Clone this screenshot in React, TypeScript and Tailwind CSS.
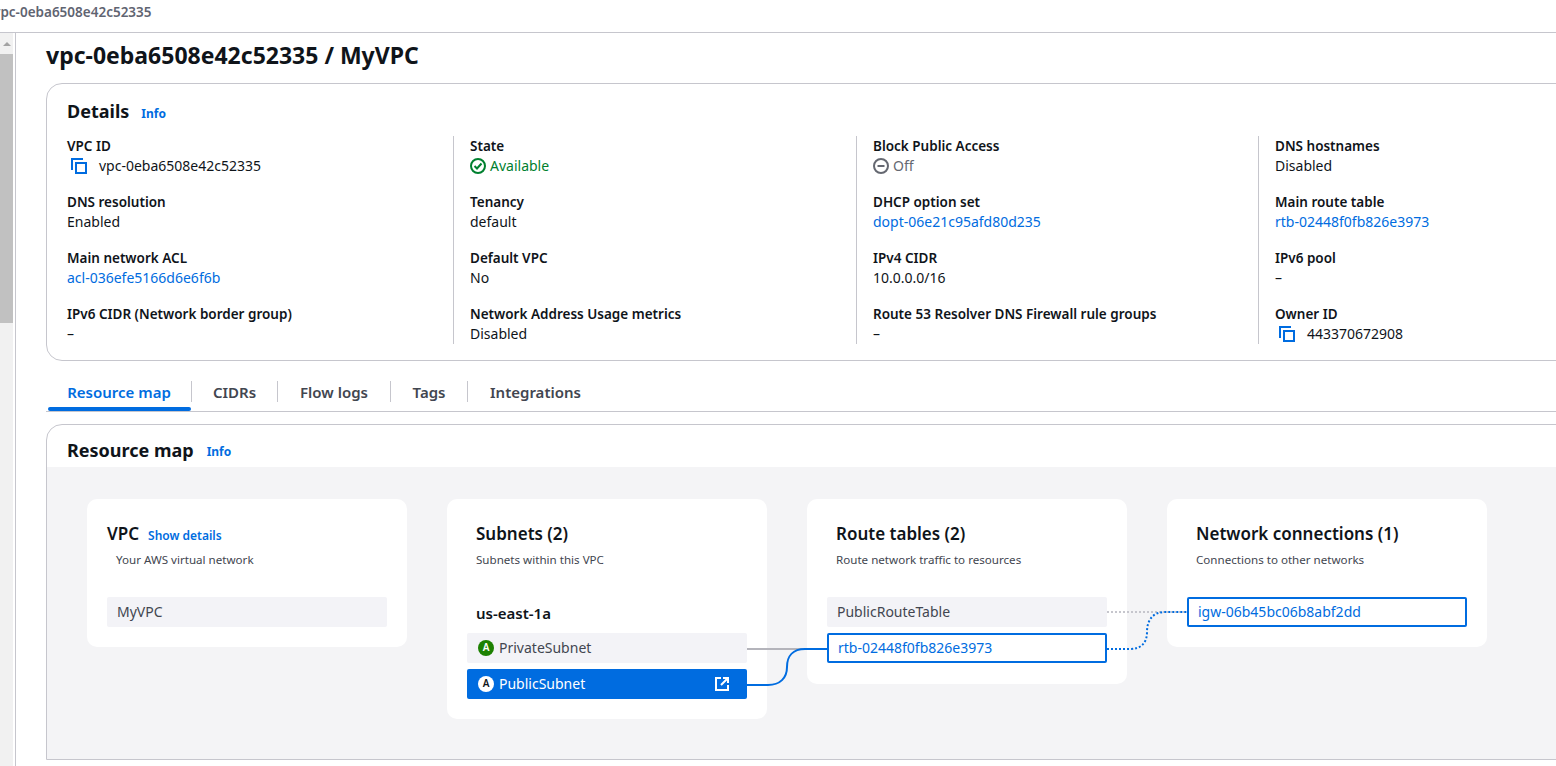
function CopyIcon() {
  return (
    <svg width="16" height="16" viewBox="0 0 16 16" fill="none" stroke="#006ce0" strokeWidth="2" className="shrink-0">
      <path d="M1 12V1h11" />
      <rect x="5" y="5" width="10" height="10" />
    </svg>
  );
}

function Field({ label, children }: { label: string; children: React.ReactNode }) {
  return (
    <div className="h-[40px] text-[14px] leading-[20px]">
      <div className="text-[13.5px] font-semibold text-[#0f141a]">{label}</div>
      <div className="text-[#0f141a]">{children}</div>
    </div>
  );
}

function Link({ children }: { children: React.ReactNode }) {
  return <span className="text-[#006ce0]">{children}</span>;
}

function Badge({ inverted }: { inverted?: boolean }) {
  return (
    <span
      className={
        inverted
          ? "flex h-4 w-4 items-center justify-center rounded-full bg-white text-[10px] font-semibold text-[#0f141a]"
          : "flex h-4 w-4 items-center justify-center rounded-full bg-[#1d8102] text-[10px] font-semibold text-white"
      }
    >
      A
    </span>
  );
}

const tabs = [
  { name: "Resource map", width: "w-[143px]" },
  { name: "CIDRs", width: "w-[86px]" },
  { name: "Flow logs", width: "w-[113px]" },
  { name: "Tags", width: "w-[77px]" },
  { name: "Integrations", width: "w-[136px]" },
];

export default function App() {
  return (
    <div className="h-[766px] w-[1556px] overflow-hidden bg-white font-['Noto_Sans',sans-serif] text-[#0f141a]">
      {/* top bar */}
      <div className="h-[33px] overflow-hidden border-b border-[#c6c6cd] pl-[1px] pt-[3px] text-[13.5px] font-semibold leading-[18px] text-[#5f6471]">
        <div className="ml-[-8px]">vpc-0eba6508e42c52335</div>
      </div>

      <div className="flex h-[733px]">
        {/* scrollbar */}
        <div className="flex h-full w-[13px] shrink-0 flex-col bg-[#f1f1f1]">
          <div className="flex h-[21px] items-center justify-center">
            <div className="h-0 w-0 border-x-[4px] border-b-[4px] border-x-transparent border-b-[#a3a3a3]" />
          </div>
          <div className="h-[269px] bg-[#c1c1c1]" />
        </div>
        <div className="ml-[2px] h-full w-[1px] shrink-0 bg-[#c6c6cd]" />

        <div className="w-[1800px] shrink-0 pl-[30px]">
          <h1 className="mt-[6px] text-[23px] font-bold leading-[32px] text-[#0f141a]">
            vpc-0eba6508e42c52335 / MyVPC
          </h1>

          {/* details card */}
          <section className="mt-[12px] h-[278px] w-[1680px] rounded-[16px] border border-[#c6c6cd] pl-[20px]">
            <div className="flex h-[52px] items-center gap-[12px] pt-[2px]">
              <h2 className="text-[18px] font-bold leading-[24px]">Details</h2>
              <span className="mt-[5px] text-[12px] font-bold text-[#006ce0]">Info</span>
            </div>
            <div className="flex">
              <div className="flex w-[386px] flex-col gap-[16px]">
                <Field label="VPC ID">
                  <span className="flex items-center gap-[12px] pl-[4px]">
                    <CopyIcon />
                    vpc-0eba6508e42c52335
                  </span>
                </Field>
                <Field label="DNS resolution">Enabled</Field>
                <Field label="Main network ACL">
                  <Link>acl-036efe5166d6e6f6b</Link>
                </Field>
                <Field label="IPv6 CIDR (Network border group)">–</Field>
              </div>
              <div className="flex w-[403px] flex-col gap-[16px] border-l border-[#c6c6cd] pl-[16px]">
                <Field label="State">
                  <span className="flex items-center gap-[4px] text-[#00802f]">
                    <svg width="16" height="16" viewBox="0 0 16 16" fill="none" stroke="#00802f" strokeWidth="2">
                      <circle cx="8" cy="8" r="7" />
                      <path d="M4.5 8l2.5 2.5 4.5-5" />
                    </svg>
                    Available
                  </span>
                </Field>
                <Field label="Tenancy">default</Field>
                <Field label="Default VPC">No</Field>
                <Field label="Network Address Usage metrics">Disabled</Field>
              </div>
              <div className="flex w-[402px] flex-col gap-[16px] border-l border-[#c6c6cd] pl-[16px]">
                <Field label="Block Public Access">
                  <span className="flex items-center gap-[4px] text-[#656871]">
                    <svg width="16" height="16" viewBox="0 0 16 16" fill="none" stroke="#656871" strokeWidth="2">
                      <circle cx="8" cy="8" r="7" />
                      <path d="M4.5 8h7" />
                    </svg>
                    Off
                  </span>
                </Field>
                <Field label="DHCP option set">
                  <Link>dopt-06e21c95afd80d235</Link>
                </Field>
                <Field label="IPv4 CIDR">10.0.0.0/16</Field>
                <Field label="Route 53 Resolver DNS Firewall rule groups">–</Field>
              </div>
              <div className="flex w-[403px] flex-col gap-[16px] border-l border-[#c6c6cd] pl-[16px]">
                <Field label="DNS hostnames">Disabled</Field>
                <Field label="Main route table">
                  <Link>rtb-02448f0fb826e3973</Link>
                </Field>
                <Field label="IPv6 pool">–</Field>
                <Field label="Owner ID">
                  <span className="flex items-center gap-[12px] pl-[4px]">
                    <CopyIcon />
                    443370672908
                  </span>
                </Field>
              </div>
            </div>
          </section>

          {/* tabs */}
          <div className="mt-[20px] flex h-[31px] w-[1680px] items-start border-b border-[#c6c6cd] pl-[2px]">
            {tabs.map((tab, i) => (
              <div
                key={tab.name}
                className={
                  i === 0
                    ? `relative flex h-[30px] ${tab.width} justify-center pr-[1px] text-[15px] font-semibold leading-[22px] text-[#006ce0]`
                    : `relative flex h-[21px] ${tab.width} justify-center border-l border-[#c6c6cd] text-[15px] font-semibold leading-[22px] text-[#424650]`
                }
              >
                {tab.name}
                {i === 0 && (
                  <div className="absolute bottom-0 left-0 right-0 h-[4px] rounded-[2px] bg-[#006ce0]" />
                )}
              </div>
            ))}
          </div>

          {/* resource map */}
          <section className="mt-[12px] h-[336px] w-[1680px] overflow-hidden rounded-t-[16px] border border-[#c6c6cd]">
            <div className="flex h-[42px] items-center gap-[13px] pl-[20px] pt-[7px]">
              <h2 className="text-[18px] font-bold leading-[24px]">Resource map</h2>
              <span className="mt-[5px] text-[12px] font-bold text-[#006ce0]">Info</span>
            </div>
            <div className="relative flex h-[292px] items-start gap-[40px] bg-[#f4f4f6] pl-[40px] pt-[32px]">
              <div className="h-[148px] w-[320px] rounded-[10px] bg-white px-[20px] pt-[23px]">
                <div className="flex items-center gap-[9px]">
                  <span className="text-[17px] font-semibold leading-[24px]">VPC</span>
                  <span className="mt-[3px] text-[12px] font-semibold text-[#006ce0]">Show details</span>
                </div>
                <p className="mt-[6px] pl-[9px] text-[11.6px] leading-[16px] text-[#424650]">Your AWS virtual network</p>
                <div className="mt-[29px] h-[30px] rounded-[2px] bg-[#f3f3f7] pl-[10px] text-[14px] leading-[30px] text-[#424650]">
                  MyVPC
                </div>
              </div>

              <div className="h-[220px] w-[320px] rounded-[10px] bg-white px-[20px] pt-[23px]">
                <div className="pl-[9px] text-[17px] font-semibold leading-[24px]">Subnets (2)</div>
                <p className="mt-[6px] pl-[9px] text-[11.6px] leading-[16px] text-[#424650]">Subnets within this VPC</p>
                <div className="mt-[35px] pl-[9px] text-[15px] font-semibold leading-[20px]">us-east-1a</div>
                <div className="mt-[10px] flex h-[30px] items-center gap-[5px] rounded-[2px] bg-[#f3f3f7] pb-[1px] pl-[11px] text-[14px] text-[#424650]">
                  <Badge />
                  PrivateSubnet
                </div>
                <div className="mt-[6px] flex h-[30px] items-center gap-[5px] rounded-[2px] bg-[#006ce0] pb-[1px] pl-[11px] pr-[17px] text-[14px] text-white">
                  <Badge inverted />
                  PublicSubnet
                  <svg width="16" height="16" viewBox="0 0 16 16" fill="none" stroke="#ffffff" strokeWidth="2" className="ml-auto">
                    <path d="M7 2H2v12h12V9" />
                    <path d="M9 2h5v5M14 2L7 9" />
                  </svg>
                </div>
              </div>

              <div className="h-[185px] w-[320px] rounded-[10px] bg-white px-[20px] pt-[23px]">
                <div className="pl-[9px] text-[17px] font-semibold leading-[24px]">Route tables (2)</div>
                <p className="mt-[6px] pl-[9px] text-[11.6px] leading-[16px] text-[#424650]">Route network traffic to resources</p>
                <div className="mt-[29px] h-[30px] rounded-[2px] bg-[#f3f3f7] pl-[10px] text-[14px] leading-[30px] text-[#424650]">
                  PublicRouteTable
                </div>
                <div className="mt-[6px] h-[30px] rounded-[2px] border-2 border-[#006ce0] pl-[9px] text-[14px] leading-[26px] text-[#006ce0]">
                  rtb-02448f0fb826e3973
                </div>
              </div>

              <div className="h-[148px] w-[320px] rounded-[10px] bg-white px-[20px] pt-[23px]">
                <div className="pl-[9px] text-[17px] font-semibold leading-[24px]">Network connections (1)</div>
                <p className="mt-[6px] pl-[9px] text-[11.6px] leading-[16px] text-[#424650]">Connections to other networks</p>
                <div className="mt-[29px] h-[30px] rounded-[2px] border-2 border-[#006ce0] pl-[9px] text-[14px] leading-[26px] text-[#006ce0]">
                  igw-06b45bc06b8abf2dd
                </div>
              </div>

              {/* connectors, viewBox in page coordinates */}
              <svg className="pointer-events-none absolute left-0 top-0" width="1556" height="292" viewBox="47 467 1556 292" fill="none">
                <path d="M747 649H827" stroke="#b4b4bb" strokeWidth="2" />
                <path d="M1107 612H1187" stroke="#c6c6cd" strokeWidth="2" strokeDasharray="2 2" />
                <path d="M1107 649H1130C1141 649 1147 643 1147 632C1147 620 1153 612 1165 612H1187" stroke="#006ce0" strokeWidth="2" strokeDasharray="2 2" />
                <path d="M747 685H768C780 685 787 678 787 667C787 656 793 649 805 649H827" stroke="#006ce0" strokeWidth="2" />
              </svg>
            </div>
          </section>
        </div>
      </div>
    </div>
  );
}
